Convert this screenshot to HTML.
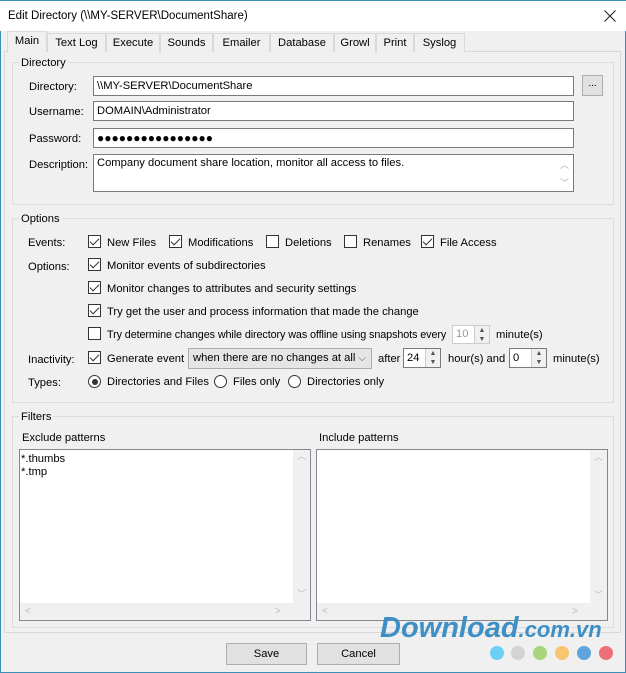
<!DOCTYPE html>
<html><head><meta charset="utf-8"><style>
*{box-sizing:border-box;margin:0;padding:0}
body{width:626px;height:673px;overflow:hidden;background:#f0f0f0;font:11.2px "Liberation Sans",sans-serif;color:#000;position:relative}
.a{position:absolute;white-space:nowrap}
span.a{margin-top:2px}
.win{position:absolute;left:0;top:0;width:626px;height:673px;border:1px solid #3c8fb4;border-top:none}
.title{position:absolute;left:0;top:0;width:626px;height:31px;background:#fff;border-top:1px solid #3c8fb4}
.tab{position:absolute;top:33px;height:19px;border:1px solid #d9d9d9;border-bottom:none;background:#f0f0f0;text-align:center;line-height:19px}
.page{position:absolute;left:4px;top:51px;width:617px;height:582px;border:1px solid #d9d9d9;background:#f0f0f0}
.grp{position:absolute;border:1px solid #dcdcdc;}
.gl{position:absolute;background:#f0f0f0;padding:0 2px;line-height:12px}
.in{position:absolute;background:#fff;border:1px solid #7a7a7a;height:20px;line-height:19px;padding-left:3px}
.cb{position:absolute;width:13px;height:13px;border:1px solid #333;background:#fff}
.cb.c::after{content:"";position:absolute;left:3px;top:0px;width:4px;height:8px;border:solid #333;border-width:0 1.3px 1.3px 0;transform:rotate(45deg)}
.rb{position:absolute;width:13px;height:13px;border:1px solid #333;border-radius:50%;background:#fff}
.rb.c::after{content:"";position:absolute;left:2.5px;top:2.5px;width:6px;height:6px;border-radius:50%;background:#333}
.spin{position:absolute;right:0;top:0;width:15px;height:100%;border-left:1px solid #ccc;background:#f0f0f0;font-size:7px;line-height:9px;text-align:center;color:#555}
.btn{position:absolute;top:643px;height:22px;background:#e1e1e1;border:1px solid #adadad;text-align:center;line-height:21px}
.dot{position:absolute;top:646px;width:14px;height:14px;border-radius:50%}
</style></head><body>
<div class="win"></div>
<div class="title"><span class="a" style="left:8px;top:7px;font-size:11.5px">Edit Directory (\\MY-SERVER\DocumentShare)</span>
<svg class="a" style="left:604px;top:9px" width="12" height="12" viewBox="0 0 12 12"><path d="M0.5 0.5L11.5 11.5M11.5 0.5L0.5 11.5" stroke="#222" stroke-width="1.1"/></svg></div>
<div class="page"></div>
<div class="tab" style="left:7px;top:31px;height:21px;width:40px;background:#f0f0f0;z-index:2;line-height:19px">Main</div>
<div class="tab" style="left:47px;width:59px">Text Log</div>
<div class="tab" style="left:106px;width:54px">Execute</div>
<div class="tab" style="left:160px;width:53px">Sounds</div>
<div class="tab" style="left:213px;width:57px">Emailer</div>
<div class="tab" style="left:270px;width:64px">Database</div>
<div class="tab" style="left:334px;width:42px">Growl</div>
<div class="tab" style="left:376px;width:38px">Print</div>
<div class="tab" style="left:414px;width:51px">Syslog</div>

<div class="grp" style="left:12px;top:62px;width:602px;height:143px"></div>
<span class="gl a" style="left:19px;top:55px">Directory</span>
<span class="a" style="left:29px;top:79px">Directory:</span>
<div class="in" style="left:93px;top:76px;width:481px">\\MY-SERVER\DocumentShare</div>
<div class="a" style="left:582px;top:75px;width:21px;height:21px;border:1px solid #adadad;background:#e1e1e1;text-align:center;line-height:16px;font-size:10px">...</div>
<span class="a" style="left:29px;top:104px">Username:</span>
<div class="in" style="left:93px;top:101px;width:481px">DOMAIN\Administrator</div>
<span class="a" style="left:29px;top:131px">Password:</span>
<div class="in" style="left:93px;top:128px;width:481px;font-size:12px">●●●●●●●●●●●●●●●●</div>
<span class="a" style="left:29px;top:157px">Description:</span>
<div class="in" style="left:93px;top:154px;width:481px;height:38px;line-height:17px">Company document share location, monitor all access to files.<span class="a" style="right:4px;top:0px;color:#aaa;font-size:9px">︿</span><span class="a" style="right:4px;top:18px;color:#aaa;font-size:9px">﹀</span></div>

<div class="grp" style="left:12px;top:218px;width:602px;height:185px"></div>
<span class="gl a" style="left:19px;top:211px">Options</span>
<span class="a" style="left:28px;top:235px">Events:</span>
<div class="cb c" style="left:88px;top:235px"></div><span class="a" style="left:107px;top:235px">New Files</span>
<div class="cb c" style="left:169px;top:235px"></div><span class="a" style="left:188px;top:235px">Modifications</span>
<div class="cb" style="left:266px;top:235px"></div><span class="a" style="left:285px;top:235px">Deletions</span>
<div class="cb" style="left:344px;top:235px"></div><span class="a" style="left:363px;top:235px">Renames</span>
<div class="cb c" style="left:421px;top:235px"></div><span class="a" style="left:440px;top:235px">File Access</span>
<span class="a" style="left:28px;top:259px">Options:</span>
<div class="cb c" style="left:88px;top:258px"></div><span class="a" style="left:107px;top:258px">Monitor events of subdirectories</span>
<div class="cb c" style="left:88px;top:281px"></div><span class="a" style="left:107px;top:281px">Monitor changes to attributes and security settings</span>
<div class="cb c" style="left:88px;top:304px"></div><span class="a" style="left:107px;top:304px">Try get the user and process information that made the change</span>
<div class="cb" style="left:88px;top:327px"></div><span class="a" style="left:107px;top:327px;font-size:10.8px;letter-spacing:-0.1px">Try determine changes while directory was offline using snapshots every</span>
<div class="in" style="left:452px;top:325px;width:38px;height:19px;line-height:17px;color:#999;border-color:#ccc">10<div class="spin">▲<br>▼</div></div>
<span class="a" style="left:496px;top:327px">minute(s)</span>
<span class="a" style="left:28px;top:352px">Inactivity:</span>
<div class="cb c" style="left:88px;top:351px"></div><span class="a" style="left:107px;top:351px">Generate event</span>
<div class="a" style="left:188px;top:348px;width:184px;height:21px;background:#e5e5e5;border:1px solid #acacac;line-height:19px;padding-left:4px">when there are no changes at all<span class="a" style="right:5px;top:-2px;color:#555;font-size:10px">⌵</span></div>
<span class="a" style="left:378px;top:351px">after</span>
<div class="in" style="left:403px;top:348px;width:38px;height:20px">24<div class="spin">▲<br>▼</div></div>
<span class="a" style="left:448px;top:351px">hour(s) and</span>
<div class="in" style="left:509px;top:348px;width:38px;height:20px">0<div class="spin">▲<br>▼</div></div>
<span class="a" style="left:553px;top:351px">minute(s)</span>
<span class="a" style="left:28px;top:375px">Types:</span>
<div class="rb c" style="left:88px;top:375px"></div><span class="a" style="left:107px;top:374px">Directories and Files</span>
<div class="rb" style="left:214px;top:375px"></div><span class="a" style="left:233px;top:374px">Files only</span>
<div class="rb" style="left:288px;top:375px"></div><span class="a" style="left:307px;top:374px">Directories only</span>

<div class="grp" style="left:12px;top:416px;width:602px;height:212px"></div>
<span class="gl a" style="left:19px;top:409px">Filters</span>
<span class="a" style="left:22px;top:430px">Exclude patterns</span>
<span class="a" style="left:319px;top:430px">Include patterns</span>
<div class="a" style="left:19px;top:449px;width:292px;height:172px;background:#fff;border:1px solid #828790;line-height:13px;padding:3px 1px">*.thumbs<br>*.tmp
<div class="a" style="right:0;top:0;width:17px;height:153px;background:#f0f0f0;color:#bbb;font-size:9px;text-align:center">︿<div style="position:absolute;bottom:2px;width:17px">﹀</div></div>
<div class="a" style="left:0;bottom:0;width:290px;height:17px;background:#f0f0f0;color:#bbb;font-size:10px;line-height:17px"><span style="position:absolute;left:5px">&lt;</span><span style="position:absolute;left:255px">&gt;</span></div></div>
<div class="a" style="left:316px;top:449px;width:292px;height:172px;background:#fff;border:1px solid #828790">
<div class="a" style="right:0;top:0;width:17px;height:153px;background:#f0f0f0;color:#bbb;font-size:9px;text-align:center">︿<div style="position:absolute;bottom:2px;width:17px">﹀</div></div>
<div class="a" style="left:0;bottom:0;width:290px;height:17px;background:#f0f0f0;color:#bbb;font-size:10px;line-height:17px"><span style="position:absolute;left:5px">&lt;</span><span style="position:absolute;left:255px">&gt;</span></div></div>

<span class="a" style="left:380px;top:610px;font:italic bold 29px 'Liberation Sans',sans-serif;color:#3d8fc6;letter-spacing:0px">Download<span style="font-size:22px">.com.vn</span></span>
<div class="btn" style="left:226px;width:81px">Save</div>
<div class="btn" style="left:317px;width:83px">Cancel</div>
<div class="dot" style="left:490px;background:#6ccff5"></div>
<div class="dot" style="left:511px;background:#d3d3d3"></div>
<div class="dot" style="left:533px;background:#a8d67c"></div>
<div class="dot" style="left:555px;background:#f7c46f"></div>
<div class="dot" style="left:577px;background:#5fa5db"></div>
<div class="dot" style="left:599px;background:#ee6f77"></div>
</body></html>
